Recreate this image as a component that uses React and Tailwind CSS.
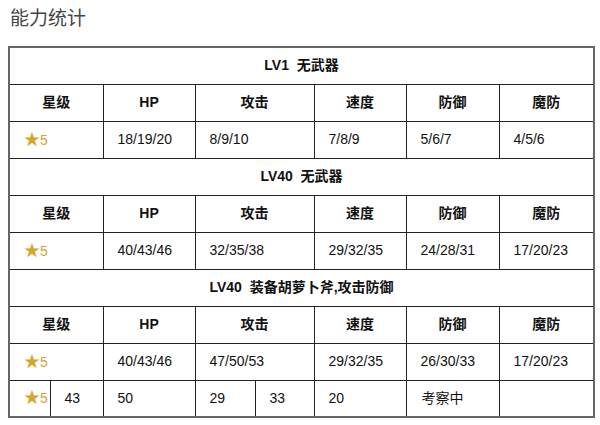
const font = { fontFamily: '"Liberation Sans", "Noto Sans CJK SC", sans-serif' }

const sections = [
  {
    title: 'LV1  无武器',
    values: ['18/19/20', '8/9/10', '7/8/9', '5/6/7', '4/5/6'],
  },
  {
    title: 'LV40  无武器',
    values: ['40/43/46', '32/35/38', '29/32/35', '24/28/31', '17/20/23'],
  },
  {
    title: 'LV40  装备胡萝卜斧,攻击防御',
    values: ['40/43/46', '47/50/53', '29/32/35', '26/30/33', '17/20/23'],
  },
]

const td = 'border border-[#222] h-[37px] p-0 text-[14px] text-[#111]'

function Star() {
  return (
    <span className="text-[#d6a52a]">
      <span className="text-[16px]">★</span>5
    </span>
  )
}

function HeaderRow() {
  return (
    <tr>
      <th colSpan={2} className={td + ' font-bold text-center'}>星级</th>
      <th className={td + ' font-bold text-center'}>HP</th>
      <th colSpan={2} className={td + ' font-bold text-center'}>攻击</th>
      <th className={td + ' font-bold text-center'}>速度</th>
      <th className={td + ' font-bold text-center'}>防御</th>
      <th className={td + ' font-bold text-center'}>魔防</th>
    </tr>
  )
}

export default function App() {
  return (
    <div className="w-[600px] h-[425px] bg-white overflow-hidden" style={font}>
      <h1 className="pl-[10px] pt-[7px] text-[19px] leading-[24px] text-[#444] font-normal">能力统计</h1>
      <div className="pl-[8px] pt-[15px]">
        <table className="table-fixed border-collapse w-[585px] border-2 border-[#666]">
          <colgroup>
            <col className="w-[41px]" />
            <col className="w-[53px]" />
            <col className="w-[92px]" />
            <col className="w-[60px]" />
            <col className="w-[59px]" />
            <col className="w-[92px]" />
            <col className="w-[93px]" />
            <col className="w-[95px]" />
          </colgroup>
          <tbody>
            {sections.map((s) => (
              <>
                <tr key={s.title + 't'}>
                  <td colSpan={8} className={td + ' font-bold text-center whitespace-pre'}>{s.title}</td>
                </tr>
                <HeaderRow key={s.title + 'h'} />
                <tr key={s.title + 'v'}>
                  <td colSpan={2} className={td + ' pl-[14px]'}><Star /></td>
                  <td className={td + ' pl-[14px]'}>{s.values[0]}</td>
                  <td colSpan={2} className={td + ' pl-[14px]'}>{s.values[1]}</td>
                  <td className={td + ' pl-[14px]'}>{s.values[2]}</td>
                  <td className={td + ' pl-[14px]'}>{s.values[3]}</td>
                  <td className={td + ' pl-[14px]'}>{s.values[4]}</td>
                </tr>
              </>
            ))}
            <tr>
              <td className={td + ' pl-[14px]'}><Star /></td>
              <td className={td + ' pl-[14px]'}>43</td>
              <td className={td + ' pl-[14px]'}>50</td>
              <td className={td + ' pl-[14px]'}>29</td>
              <td className={td + ' pl-[14px]'}>33</td>
              <td className={td + ' pl-[14px]'}>20</td>
              <td className={td + ' pl-[15px]'}>考察中</td>
              <td className={td}></td>
            </tr>
          </tbody>
        </table>
      </div>
    </div>
  )
}
